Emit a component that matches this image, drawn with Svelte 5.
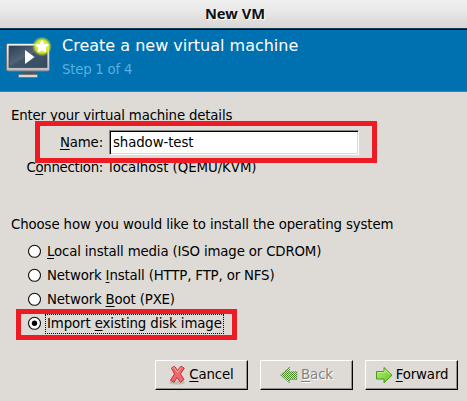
<script>
  const options = [
    { pre: '', key: 'L', post: 'ocal install media (ISO image or CDROM)' },
    { pre: 'Network ', key: 'I', post: 'nstall (HTTP, FTP, or NFS)' },
    { pre: 'Network ', key: 'B', post: 'oot (PXE)' },
    { pre: 'Import ', key: 'e', post: 'xisting disk image' }
  ];
  let selected = $state(3);
</script>

<div class="window">
  <div class="titlebar">New VM</div>
  <header>
    <svg width="48" height="48" viewBox="0 0 48 48">
      <defs>
        <linearGradient id="frame" x1="0" y1="0" x2="0" y2="1">
          <stop offset="0" stop-color="#f4f4f4" /><stop offset="1" stop-color="#bcbcbc" />
        </linearGradient>
        <linearGradient id="screen" x1="0" y1="0" x2="1" y2="1">
          <stop offset="0" stop-color="#2b4055" /><stop offset=".45" stop-color="#536475" />
          <stop offset=".5" stop-color="#40566a" /><stop offset="1" stop-color="#334b60" />
        </linearGradient>
        <radialGradient id="glow">
          <stop offset="0" stop-color="#f7fa58" /><stop offset=".65" stop-color="#e2eb20" stop-opacity=".95" />
          <stop offset="1" stop-color="#c8df20" stop-opacity="0" />
        </radialGradient>
      </defs>
      <path d="M19 35h13l1 4H18z" fill="#4d565e" />
      <rect x="14.500" y="38.500" width="19" height="3" rx="1" fill="#d8d8d8" stroke="#777" />
      <rect x="2.500" y="7.500" width="43" height="27.500" rx="1.500" fill="url(#frame)" stroke="#707a80" />
      <rect x="5" y="10" width="38" height="21.500" fill="url(#screen)" stroke="#39434c" stroke-width=".7" />
      <path d="M21 14l9.500 7-9.500 7z" fill="#fff" />
      <circle cx="38" cy="10.500" r="10" fill="url(#glow)" />
      <path d="M38 4.500L39.800 8.300 44 8.700 40.900 11.500 41.800 15.700 38 13.600 34.200 15.700 35.100 11.500 32 8.700 36.200 8.300z" fill="#fff" stroke="#fff" stroke-width="1.200" stroke-linejoin="round" />
    </svg>
    <div class="headings">
      <h1>Create a new virtual machine</h1>
      <p>Step 1 of 4</p>
    </div>
  </header>

  <main>
    <div class="line intro">Enter your virtual machine details</div>
    <div class="field">
      <label for="name"><u>N</u>ame:</label>
      <input id="name" value="shadow-test" />
    </div>
    <div class="field conn">
      <span class="lab">C<u>o</u>nnection:</span>
      <span class="val">localhost (QEMU/KVM)</span>
    </div>
    <div class="line choose">Choose how you would like to install the operating system</div>
    <div class="options">
      {#each options as o, i}
        <button class="option" onclick={() => (selected = i)}>
          <svg width="14" height="14" viewBox="0 0 14 14">
            <circle cx="7.500" cy="7.300" r="6" fill="#fff" stroke="#111" stroke-width="1.100" />
            {#if selected === i}<circle cx="7.500" cy="7.300" r="2.700" fill="#000" />{/if}
          </svg>
          <span class="text" class:focused={selected === i}>{o.pre}<u>{o.key}</u>{o.post}</span>
        </button>
      {/each}
    </div>
    <div class="actions">
      <button class="action cancel">
        <svg width="17" height="20" viewBox="0 0 17 20">
          <ellipse cx="8" cy="17.500" rx="8" ry="2" fill="#aaa69f" opacity=".6" />
          <path d="M2.500 3L5.500 1.300 8.500 5.500 12 1.200 15.300 3.200 11.500 9 15 14.500 11.500 17.300 8 12.500 5 17.300 1.500 15.300 5.500 9z" fill="#ee686a" stroke="#c23338" stroke-width="1" stroke-linejoin="round" />
          <path d="M3.500 3.500l1.500-1 3.500 5L12.300 2.500" fill="none" stroke="#f7a3a2" />
        </svg>
        <span><u>C</u>ancel</span>
      </button>
      <button class="action back">
        <svg width="18" height="18" viewBox="0 0 18 18">
          <defs>
            <pattern id="dither" width="2" height="2" patternUnits="userSpaceOnUse">
              <rect width="2" height="2" fill="#d5dccd" />
              <path d="M0 0h1v1H0zM1 1h1v1H1z" fill="#4c8a2c" />
            </pattern>
          </defs>
          <path d="M0.500 9L9.500 1v4.500H17v8H9.500V17z" fill="url(#dither)" stroke="#648852" stroke-width=".7" stroke-dasharray="1 1" />
        </svg>
        <span><u>B</u>ack</span>
      </button>
      <button class="action forward">
        <svg width="18" height="18" viewBox="0 0 18 18">
          <defs>
            <linearGradient id="go" x1="0" y1="0" x2="1" y2="1">
              <stop offset="0" stop-color="#b8ed78" /><stop offset="1" stop-color="#5fc51e" />
            </linearGradient>
          </defs>
          <path d="M1.500 5.500H9V1.500L17 9.200 9 16.800V13H1.500z" fill="url(#go)" stroke="#4b9b20" stroke-linejoin="round" />
          <path d="M2.500 6.500H10V3.800l5 4.900" fill="none" stroke="#caef9c" stroke-width=".8" />
        </svg>
        <span><u>F</u>orward</span>
      </button>
    </div>
  </main>
  <div class="mark name-mark"></div>
  <div class="mark import-mark"></div>
</div>

<style>
  :global(body) { margin: 0; }
  .window {
    position: relative; box-sizing: border-box; width: 467px; height: 401px; overflow: hidden;
    background: #dedbd6; color: #000; font: 13.330px/16px "DejaVu Sans", sans-serif;
    letter-spacing: -.14px;
    display: flex; flex-direction: column;
  }
  .titlebar {
    box-sizing: border-box; height: 29px; flex: none; padding-left: 3px; text-align: center; color: #111;
    font: bold 14.700px/27px "Noto Sans", "Open Sans", sans-serif; text-shadow: 1px 1px #fff; letter-spacing: 0;
    background: linear-gradient(#efefef 0, #ebeaea 30%, #d9d6d4); border-bottom: 1px solid #07425f;
  }
  header {
    box-sizing: border-box; height: 63px; flex: none; display: flex; padding: 6px 0 0 4px;
    background: #0071b0; border-top: 1px solid #000; border-bottom: 1px solid #1e8bd0;
  }
  header svg { flex: none; }
  .headings { margin-left: 10px; }
  h1 { margin: 0; font-size: 16px; line-height: 20px; font-weight: 400; color: #fff; letter-spacing: 0; }
  p { margin: 6px 0 0; line-height: 16px; color: #59aee3; letter-spacing: -.25px; }
  main { display: flex; flex-direction: column; }
  .line { margin-left: 11px; white-space: nowrap; }
  .intro { margin-top: 15px; height: 23px; line-height: 17px; letter-spacing: -.17px; }
  u { text-decoration: underline; text-decoration-thickness: 1px; text-underline-offset: 2px; text-decoration-skip-ink: none; }
  .field { display: flex; align-items: center; height: 25px; }
  label, .lab { width: 103px; text-align: right; flex: none; }
  .lab { letter-spacing: -.3px; }
  input {
    box-sizing: border-box; width: 250px; height: 25px; margin: 0 0 0 6px; padding: 0 0 1px 3px; outline: none;
    font: inherit; letter-spacing: -.1px; background: #fff; border: 1px solid; border-color: #8b8985 #fff #fff #8b8985;
    box-shadow: inset 1px 1px #000, inset -1px -1px #dedbd6; border-radius: 0;
  }
  .conn { box-sizing: border-box; padding-top: 2px; height: 24px; }
  .val { margin-left: 6px; letter-spacing: -.05px; }
  .choose { margin-top: 38px; height: 22px; letter-spacing: -.125px; }
  .options { display: flex; flex-direction: column; margin-left: 27px; }
  .option {
    display: flex; align-items: center; height: 24px; padding: 0; border: 0; background: none;
    font: inherit; letter-spacing: -.16px; color: inherit; text-align: left; white-space: nowrap;
  }
  .option svg { flex: none; margin-right: 4px; overflow: visible; }
  .text { margin-top: 2px; padding: 0 1px 1px; border: 1px dotted transparent; line-height: 17px; }
  .option:last-child { letter-spacing: -.11px; }
  .focused { border-color: #000; }
  .actions { display: flex; gap: 12px; margin: 25px 0 0 155px; }
  .action {
    box-sizing: border-box; width: 93px; height: 30px; padding: 0; display: flex; align-items: center; justify-content: center;
    gap: 3px; font: inherit; letter-spacing: -.14px; color: #000; background: #dedbd6; border: 1px solid; border-color: #fff #000 #000 #fff;
    box-shadow: inset -1px -1px #96938e; border-radius: 0;
  }
  .back { color: #85827e; text-shadow: 1px 1px #fff; }
  .mark { position: absolute; box-sizing: border-box; border: 5px solid #ed1c24; pointer-events: none; }
  .name-mark { left: 35px; top: 121px; width: 342px; height: 42px; }
  .import-mark { left: 16px; top: 309px; width: 221px; height: 31px; }
</style>
